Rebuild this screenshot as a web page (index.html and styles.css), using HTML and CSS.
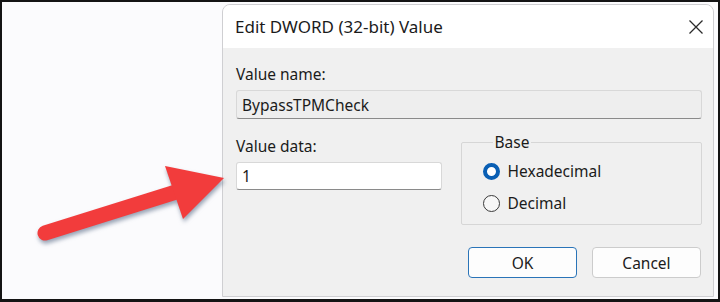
FILE: index.html
```html
<!DOCTYPE html>
<html lang="en">

<head>
    <meta charset="UTF-8">
    <meta name="viewport" content="width=device-width, initial-scale=1.0">
    <title>Edit DWORD (32-bit) Value</title>
    <link rel="stylesheet" href="styles.css">
</head>

<body>
    <div class="screen">
        <div class="dialog">
            <div class="title-bar">
                <span class="title">Edit DWORD (32-bit) Value</span>
                <svg class="close" width="16" height="16" viewBox="0 0 16 16">
                    <path d="M1.5 1.5 L14.5 14.5 M14.5 1.5 L1.5 14.5" stroke="#2b2b2b" stroke-width="1.3" fill="none" />
                </svg>
            </div>

            <div class="content">
                <div class="label">Value name:</div>
                <div class="field field-name">BypassTPMCheck</div>

                <div class="row">
                    <div class="data-col">
                        <div class="label">Value data:</div>
                        <div class="field field-data">1</div>
                    </div>

                    <fieldset class="base">
                        <legend>Base</legend>
                        <div class="radio">
                            <span class="dot checked"></span>
                            <span>Hexadecimal</span>
                        </div>
                        <div class="radio">
                            <span class="dot"></span>
                            <span>Decimal</span>
                        </div>
                    </fieldset>
                </div>

                <div class="buttons">
                    <div class="btn btn-ok">OK</div>
                    <div class="btn">Cancel</div>
                </div>
            </div>
        </div>

        <!-- red annotation arrow drawn over the page -->
        <svg class="arrow" width="240" height="260" viewBox="0 0 240 260">
            <line x1="45" y1="233" x2="176" y2="192" stroke="#f23c3c" stroke-width="15" stroke-linecap="round" />
            <polygon points="224,178 165,166 183,219" fill="#f23c3c" />
        </svg>
    </div>
</body>

</html>
```

FILE: styles.css
```css
* {
    box-sizing: border-box;
}

body {
    margin: 0;
    font-family: "Noto Sans", "Open Sans", sans-serif;
    color: #1b1b1b;
}

.screen {
    position: relative;
    width: 720px;
    height: 302px;
    border: 2px solid #141414;
    border-bottom-width: 3px;
    background: #fbfbfd;
    display: flex;
    padding: 2px 4px 0 220px;
}

.dialog {
    width: 492px;
    height: 293px;
    border: 1px solid #cfcfd2;
    border-radius: 8px 8px 0 0;
    background: #f0f0f0;
    display: flex;
    flex-direction: column;
    overflow: hidden;
}

.title-bar {
    height: 43px;
    background: #ffffff;
    display: flex;
    justify-content: space-between;
    align-items: center;
    padding: 0 9px 0 12px;
    flex-shrink: 0;
}

.title {
    font-size: 17px;
}

.content {
    padding: 16px 11px 0 13px;
    display: flex;
    flex-direction: column;
    font-size: 15.5px;
}

.label {
    line-height: 20px;
}

.field {
    border: 1px solid #d8d8d8;
    border-bottom-color: #8a8a8a;
    border-radius: 3px;
    padding-left: 5px;
    display: flex;
    align-items: center;
}

.field-name {
    margin-top: 6px;
    height: 29px;
    background: #eeeeee;
}

.row {
    display: flex;
    align-items: flex-start;
    margin-top: 14px;
}

.data-col {
    width: 206px;
    padding-top: 3px;
    display: flex;
    flex-direction: column;
}

.field-data {
    margin-top: 6px;
    height: 28px;
    background: #ffffff;
}

.base {
    margin: -1px 0 0 19px;
    width: 242px;
    height: 93px;
    border: 1px solid #d6d6d6;
    border-radius: 2px;
    padding: 3px 0 0 21px;
}

.base legend {
    padding: 0 2px;
    margin-left: 10px;
    line-height: 20px;
}

.radio {
    display: flex;
    align-items: center;
    gap: 8px;
    height: 32px;
}

.dot {
    width: 17px;
    height: 17px;
    border-radius: 50%;
    border: 1px solid #3a3a3a;
    background: #f7f7f7;
}

.dot.checked {
    border: 4.5px solid #0a5fb4;
    background: #ffffff;
}

.buttons {
    display: flex;
    justify-content: flex-end;
    gap: 15px;
    margin-top: 22px;
    padding-right: 1px;
}

.btn {
    width: 109px;
    height: 31px;
    border: 1px solid #cccccc;
    border-radius: 4px;
    background: #fdfdfd;
    display: flex;
    justify-content: center;
    align-items: center;
}

.btn-ok {
    border: 1.5px solid #2a74b8;
}

.arrow {
    position: absolute;
    left: -2px;
    top: -2px;
    filter: drop-shadow(1px 3px 2px rgba(70, 90, 120, 0.55));
}
```
